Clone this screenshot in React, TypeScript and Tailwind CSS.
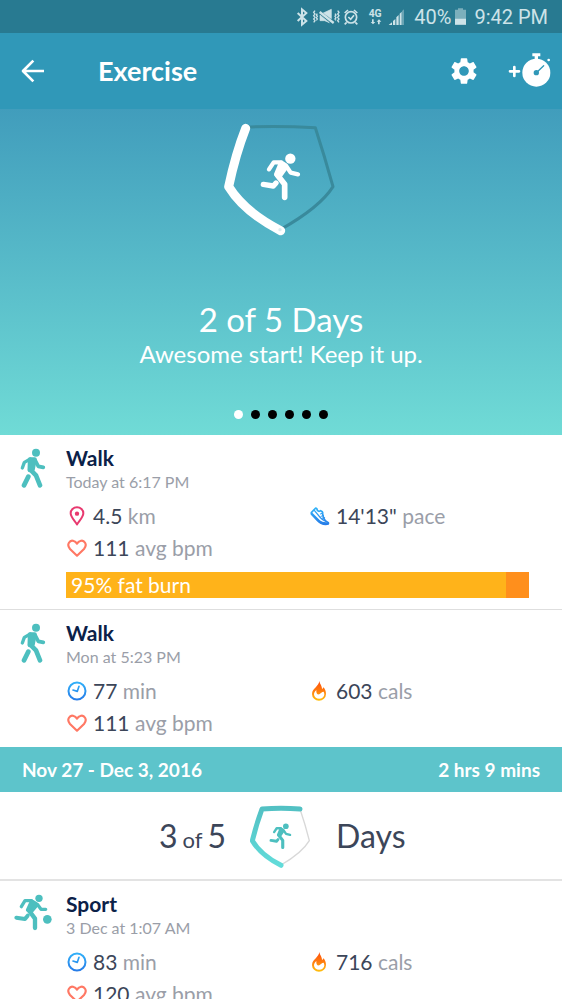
import React from 'react';

type MetricKind = 'distance' | 'pace' | 'heart' | 'time' | 'calories';

interface Metric {
  kind: MetricKind;
  value: string;
  unit: string;
}

interface Activity {
  name: string;
  when: string;
  icon: React.ReactNode;
  metrics: Metric[];
  fatBurn?: number;
}

function RunnerShape() {
  return (
    <g fill="none" stroke="currentColor" strokeLinecap="round" strokeLinejoin="round">
      <circle cx="241" cy="145" r="15.500" fill="currentColor" stroke="none" />
      <path d="M177 177l14-21h22" strokeWidth="13" />
      <path d="M214 157l14 9 14 21 22 5" strokeWidth="13" />
      <path d="M212 158l16 14-17 24-13-4z" fill="currentColor" strokeWidth="12" />
      <path d="M202 194l22 28v39" strokeWidth="17" />
      <path d="M160 222l30 5 8-9" strokeWidth="16" />
    </g>
  );
}

function WalkIcon() {
  return (
    <svg viewBox="60 38 78 120" className="w-[26px] h-10 text-[#4dbfbf]" aria-hidden="true">
      <g fill="none" stroke="currentColor" strokeLinecap="round" strokeLinejoin="round">
        <circle cx="108" cy="52" r="12" fill="currentColor" stroke="none" />
        <path d="M67 98l6-17 18-10" strokeWidth="10" />
        <path d="M106 76l9 17 15 3" strokeWidth="11" />
        <path d="M90 72h14l-6 30-9 2z" fill="currentColor" strokeWidth="13" />
        <path d="M91 103l17 17 12 30" strokeWidth="14" />
        <path d="M85 124l-13 26" strokeWidth="14" />
      </g>
    </svg>
  );
}

function SportIcon() {
  return (
    <svg viewBox="41 60 117 111" className="w-[39px] h-[37px] text-[#4dbfbf]" aria-hidden="true">
      <g fill="none" stroke="currentColor" strokeLinecap="round" strokeLinejoin="round">
        <circle cx="116" cy="73" r="11" fill="currentColor" stroke="none" />
        <path d="M63 98l11-18h20" strokeWidth="10" />
        <path d="M98 83l13 8 11 15h14" strokeWidth="10" />
        <path d="M94 82l14 13-14 16-12-3z" fill="currentColor" strokeWidth="11" />
        <path d="M86 110l18 24v28" strokeWidth="13" />
        <path d="M48 131l26 4 8-10" strokeWidth="12" />
        <circle cx="141" cy="136" r="13" fill="currentColor" stroke="none" />
      </g>
    </svg>
  );
}

function MetricIcon({ kind }: { kind: MetricKind }) {
  switch (kind) {
    case 'distance':
      return (
        <svg viewBox="0 0 60 60" className="w-5 h-5" fill="none" stroke="#e8396f" strokeWidth="6" aria-hidden="true">
          <path d="M30 55C22 43 11 33 11 22a19 18 0 0 1 38 0c0 11-11 21-19 33z" strokeLinejoin="round" />
          <circle cx="30" cy="23" r="6.500" fill="#e8396f" stroke="none" />
        </svg>
      );
    case 'heart':
      return (
        <svg viewBox="0 0 60 60" className="w-5 h-5" fill="none" stroke="#ff7864" strokeWidth="6.500" aria-hidden="true">
          <path d="M30 53L9 33C-3 19 9 5 20 9c5 1 8 5 10 8 2-3 5-7 10-8 11-4 23 10 11 24z" strokeLinejoin="round" />
        </svg>
      );
    case 'time':
      return (
        <svg viewBox="0 0 60 60" className="w-5 h-5" fill="none" aria-hidden="true">
          <defs>
            <linearGradient id="clock" x1="0" y1="0" x2="0" y2="60" gradientUnits="userSpaceOnUse">
              <stop stopColor="#32b4fa" />
              <stop offset="1" stopColor="#2678e6" />
            </linearGradient>
          </defs>
          <circle cx="30" cy="30" r="25.500" stroke="url(#clock)" strokeWidth="6" />
          <path d="M36 16l-5 15-13-4" stroke="url(#clock)" strokeWidth="5" strokeLinecap="round" strokeLinejoin="round" />
        </svg>
      );
    case 'calories':
      return (
        <svg viewBox="0 0 60 60" className="w-5 h-5" aria-hidden="true">
          <defs>
            <linearGradient id="flame" x1="0" y1="0" x2="0" y2="60" gradientUnits="userSpaceOnUse">
              <stop stopColor="#ff4d0a" />
              <stop offset="0.500" stopColor="#ff7d0f" />
              <stop offset="1" stopColor="#ffc30f" />
            </linearGradient>
          </defs>
          <path
            d="M28 0c-1 8-5 12-10 18C12 24 6 29 6 39a21 20 0 0 0 42 0c0-8-3-14-7-20l-5 6c1-10-6-14-8-25zM19 27c-1 10 3 15 9 13l9-7 4-1c1 3 2 5 2 8a15 13 0 0 1-31 0c0-5 3-9 7-13z"
            fill="url(#flame)"
            fillRule="evenodd"
          />
        </svg>
      );
    case 'pace':
      return (
        <svg viewBox="0 0 60 60" className="w-5 h-5" fill="none" aria-hidden="true">
          <defs>
            <linearGradient id="shoe" x1="0" y1="0" x2="0" y2="60" gradientUnits="userSpaceOnUse">
              <stop stopColor="#32b9fa" />
              <stop offset="1" stopColor="#2678e6" />
            </linearGradient>
          </defs>
          <g stroke="url(#shoe)" strokeLinecap="round" strokeLinejoin="round">
            <path d="M4 20L17 6l4 3c0 6 6 9 11 5l5 3c1 13 4 22 10 28l8 5c1 4-2 5-8 5-10 0-17-4-24-11L4 24z" strokeWidth="5" />
            <path d="M6 24l22 22c6 6 12 7 26 6" strokeWidth="7" />
            <path d="M13 13l18 22c5 6 9 9 15 10" strokeWidth="4" />
            <path d="M31 24l8-3M33 31l8-3M36 37l8-2" strokeWidth="3" />
          </g>
        </svg>
      );
  }
}

function StatusBar() {
  return (
    <div className="flex shrink-0 items-center justify-end h-[33px] pr-[14px] bg-[#287a91] text-[#cde3e8] font-[Roboto,sans-serif] text-[20px] leading-6">
      <svg viewBox="0 5 330 90" className="w-[110px] h-[30px] mr-[10px]" fill="none" stroke="currentColor" aria-hidden="true">
        <path d="M11 38l26 24-13 11V27l13 11-26 24" strokeWidth="6" />
        <path d="M63 31l-4 5 4 5-4 5 4 5-4 5 4 5-4 5M131 31l4 5-4 5 4 5-4 5 4 5-4 5 4 5" strokeWidth="4" />
        <path d="M70 40l-3 4 3 4-3 4 3 4-3 4M123 40l3 4-3 4 3 4-3 4 3 4" strokeWidth="4" />
        <path d="M77 35l42 33" strokeWidth="7" />
        <path d="M78 44l28 23-14-6H78zM88 38l24-11v28z" fill="currentColor" strokeWidth="2" />
        <circle cx="171" cy="51" r="17" strokeWidth="5" />
        <path d="M152 38l10-9M180 29l10 9M158 66l-6 6M184 66l6 6M163 50l7 7 10-12" strokeWidth="5" />
        <g fill="currentColor" stroke="none">
          <path d="M234 57h5v8h5l-7 7-7-7h4zM257 72h-5v-8h-4l7-7 7 7h-5z" />
          <path d="M284 74l10-8v8zM297 62l7-6v18h-7zM307 51l7-7v30h-7zM317 40l6-6v40h-6z" />
          <path d="M324 32l7-6v48h-7z" opacity="0.4" />
        </g>
        <text x="224" y="50" fill="currentColor" stroke="none" fontSize="31" fontWeight="700">4G</text>
      </svg>
      <span>40%</span>
      <svg viewBox="0 0 33 50" className="w-[11px] h-[17px] ml-1 mr-2" fill="currentColor" aria-hidden="true">
        <path d="M9 0h15v5h9v26H0V5h9z" opacity="0.5" />
        <path d="M0 31h33v19H0z" />
      </svg>
      <span>9:42 PM</span>
    </div>
  );
}

function Header() {
  return (
    <header className="flex shrink-0 items-center h-[76px] pl-[21px] pr-[11px] bg-[#3098b8] text-white">
      <button type="button" aria-label="Back" className="w-6 h-6">
        <svg viewBox="0 0 72 72" className="w-6 h-6" fill="none" stroke="currentColor" strokeWidth="8">
          <path d="M69 36H8M37 5L6 36l31 31" strokeLinejoin="round" />
        </svg>
      </button>
      <h1 className="flex-1 ml-[53px] text-[27px] leading-8 font-bold">Exercise</h1>
      <button type="button" aria-label="Settings" className="w-8 h-8">
        <svg viewBox="0 0 24 24" className="w-8 h-8" fill="currentColor">
          <path d="M19.140 12.940c.04-.3.06-.61.06-.94 0-.32-.02-.64-.07-.94l2.030-1.580c.18-.14.23-.41.12-.61l-1.920-3.320c-.12-.22-.37-.29-.59-.22l-2.390.96c-.5-.38-1.030-.7-1.620-.94l-.36-2.540c-.04-.24-.24-.41-.48-.41h-3.840c-.24 0-.43.17-.47.41l-.36 2.540c-.59.24-1.130.57-1.620.94l-2.390-.96c-.22-.08-.47 0-.59.22L2.740 8.870c-.12.21-.08.47.12.61l2.030 1.580c-.05.3-.09.63-.09.94s.02.64.07.94l-2.030 1.580c-.18.14-.23.41-.12.61l1.920 3.320c.12.22.37.29.59.22l2.390-.96c.5.38 1.030.7 1.620.94l.36 2.540c.05.24.24.41.48.41h3.840c.24 0 .44-.17.47-.41l.36-2.540c.59-.24 1.130-.56 1.620-.94l2.390.96c.22.08.47 0 .59-.22l1.920-3.320c.12-.22.07-.47-.12-.61l-2.010-1.580zM12 15.600c-1.980 0-3.600-1.620-3.600-3.600s1.620-3.600 3.600-3.600 3.600 1.620 3.600 3.600-1.620 3.600-3.600 3.600z" />
        </svg>
      </button>
      <button type="button" aria-label="Track exercise" className="ml-[28px] mb-[3px] w-[43px] h-[34px]">
        <svg viewBox="683 154 129 102" className="w-[43px] h-[34px]" fill="currentColor">
          <path d="M689 209h27M702 196v27" stroke="currentColor" strokeWidth="8" strokeLinecap="round" />
          <circle cx="768" cy="213" r="42" />
          <path d="M756 155h24v9h-7v9h-10v-9h-7z" />
          <circle cx="805" cy="175" r="4" />
          <path d="M768 213l22-21" stroke="#3098b8" strokeWidth="4" strokeLinecap="round" />
          <circle cx="768" cy="213" r="8" fill="#3098b8" />
        </svg>
      </button>
    </header>
  );
}

function WeeklyGoal() {
  return (
    <section className="flex flex-col items-center pt-0.5 h-[326px] bg-linear-to-b from-[#419dbc] to-[#70dbd6] text-white">
      <svg viewBox="3 2 420 420" className="w-[140px] h-[140px]" fill="none" strokeLinecap="round" strokeLinejoin="round" aria-hidden="true">
        <path d="M107 50Q210 46 316 52Q344 138 369 229Q330 291 211 358" stroke="#398a9c" strokeWidth="9" />
        <path d="M107 54Q77 130 56 229Q102 304 212 361" stroke="#fff" strokeWidth="27" />
        <circle cx="210" cy="358" r="5" fill="#dcecef" />
        <RunnerShape />
      </svg>
      <h2 className="mt-[48px] text-[33px] leading-[40px]">2 of 5 Days</h2>
      <p className="text-[24px] leading-[30px]">Awesome start! Keep it up.</p>
      <div className="flex gap-2 mt-[41px]">
        {[0, 1, 2, 3, 4, 5].map((page) => (
          <span key={page} className={`w-[9px] h-[9px] rounded-full ${page === 0 ? 'bg-white' : 'bg-black'}`} />
        ))}
      </div>
    </section>
  );
}

function ActivityRow({ name, when, icon, metrics, fatBurn }: Activity) {
  return (
    <article className="flex pt-[9px] pb-2 pr-[10px] bg-white">
      <div className="flex shrink-0 justify-center w-[66px] pt-1">{icon}</div>
      <div className="flex-1">
        <h3 className="text-[21px] leading-7 font-bold text-[#0b2148]">{name}</h3>
        <p className="text-[16px] leading-5 text-[#9a9ea8]">{when}</p>
        <dl className="grid grid-cols-2 mt-2">
          {metrics.map((metric) => (
            <div key={metric.kind} className="flex items-center h-8 gap-[6px]">
              <dt className="flex justify-center w-[21px]" aria-label={metric.kind}>
                <MetricIcon kind={metric.kind} />
              </dt>
              <dd className="text-[21px] leading-7 text-[#3c4659]">
                {metric.value} <span className="text-[#9a9ea8]">{metric.unit}</span>
              </dd>
            </div>
          ))}
        </dl>
        {fatBurn && (
          <div className="flex mt-2 mb-[3px] mr-[23px] bg-[#ff8f1c] text-white">
            <div className="pl-[5px] bg-[#ffb31a] text-[21px] leading-[26px]" style={{ width: `${fatBurn}%` }}>
              {fatBurn}% fat burn
            </div>
          </div>
        )}
      </div>
    </article>
  );
}

function WeekSummary() {
  return (
    <section>
      <div className="flex items-center justify-between h-[45px] px-[22px] bg-[#5dc4cb] text-white text-[19px] leading-6 font-bold">
        <h2>Nov 27 - Dec 3, 2016</h2>
        <span>2 hrs 9 mins</span>
      </div>
      <div className="grid grid-cols-[1fr_62px_1fr] items-center gap-6 h-[89px] bg-white border-b-2 border-[#e3e3e3] text-[32px] leading-10 text-[#3c4659]">
        <span className="flex items-baseline justify-end gap-[5px]">
          <span>3</span>
          <span className="text-[22px] leading-6">of</span>
          <span>5</span>
        </span>
        <svg viewBox="330 43 186 192" className="w-[62px] h-[64px]" fill="none" strokeLinecap="round" strokeLinejoin="round" aria-hidden="true">
          <defs>
            <linearGradient id="badge" x1="0" y1="50" x2="0" y2="230" gradientUnits="userSpaceOnUse">
              <stop stopColor="#52c0c3" />
              <stop offset="1" stopColor="#62dcda" />
            </linearGradient>
          </defs>
          <path d="M480 58Q496 105 508 153Q486 190 423 226" stroke="#d8d8d8" strokeWidth="4" />
          <path d="M480 58Q423 54 366 58Q350 101 337 153Q362 196 423 227" stroke="url(#badge)" strokeWidth="15" />
          <g transform="translate(305 30) scale(0.550)" className="text-[#4dbfbf]">
            <RunnerShape />
          </g>
        </svg>
        <span>Days</span>
      </div>
    </section>
  );
}

export default function App() {
  return (
    <div className="flex flex-col h-screen overflow-hidden bg-white font-[Lato,sans-serif]">
      <StatusBar />
      <Header />
      <main className="flex-1 overflow-y-auto [scrollbar-width:none]">
        <WeeklyGoal />
        <div className="border-b border-[#dedede]">
          <ActivityRow
            name="Walk"
            when="Today at 6:17 PM"
            icon={<WalkIcon />}
            metrics={[
              { kind: 'distance', value: '4.5', unit: 'km' },
              { kind: 'pace', value: '14\'13"', unit: 'pace' },
              { kind: 'heart', value: '111', unit: 'avg bpm' },
            ]}
            fatBurn={95}
          />
        </div>
        <ActivityRow
          name="Walk"
          when="Mon at 5:23 PM"
          icon={<WalkIcon />}
          metrics={[
            { kind: 'time', value: '77', unit: 'min' },
            { kind: 'calories', value: '603', unit: 'cals' },
            { kind: 'heart', value: '111', unit: 'avg bpm' },
          ]}
        />
        <WeekSummary />
        <ActivityRow
          name="Sport"
          when="3 Dec at 1:07 AM"
          icon={<SportIcon />}
          metrics={[
            { kind: 'time', value: '83', unit: 'min' },
            { kind: 'calories', value: '716', unit: 'cals' },
            { kind: 'heart', value: '120', unit: 'avg bpm' },
          ]}
        />
      </main>
    </div>
  );
}
